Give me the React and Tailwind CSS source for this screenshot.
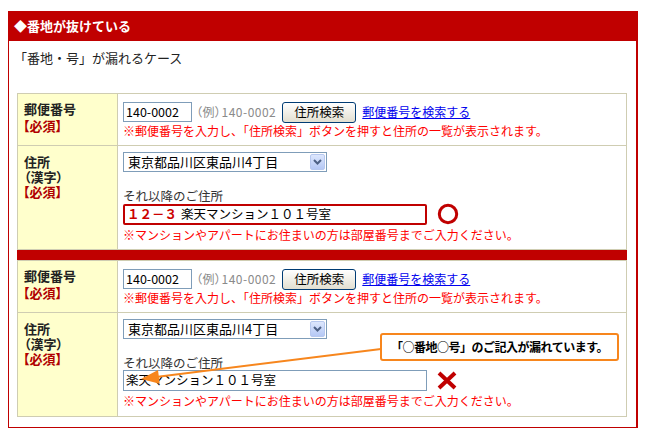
const font = { fontFamily: '"Noto Sans CJK JP", "Noto Sans", sans-serif' };

const ZipRow = () => (
  <div className="flex h-[51px]">
    <div className="w-[100px] shrink-0 bg-[#ffffcc] border-r border-[#cfcdb2] pl-[6px] pt-[6px] leading-[17px] text-[13px] font-bold [font-feature-settings:'palt']">
      <div className="text-[#222]">郵便番号</div>
      <div className="text-[#b00000] -ml-[1px]">【必須】</div>
    </div>
    <div className="flex-1 pl-[5px] pt-[8px] text-[12px]">
      <div className="flex items-center h-[20px]">
        <div className="w-[69px] h-[20px] border border-[#7f9db9] bg-white flex items-center pl-[2px] text-[12.5px] text-black">
          140-0002
        </div>
        <span className="ml-[4px] text-[#8a8a8a] tracking-[0.5px] [font-feature-settings:'palt']">（例）140-0002</span>
        <button className="ml-[6px] w-[74px] h-[21px] border border-[#003c74] rounded-[3px] bg-gradient-to-b from-white to-[#e2dfd0] text-black text-[12.5px] leading-none">
          住所検索
        </button>
        <a href="#" className="ml-[6px] text-[#0000ee] underline">
          郵便番号を検索する
        </a>
      </div>
      <div className="mt-[1px] leading-[16px] text-[#ff0000]">
        ※郵便番号を入力し、「住所検索」ボタンを押すと住所の一覧が表示されます。
      </div>
    </div>
  </div>
);

const AddressRow = ({ ok }) => (
  <div className="flex h-[104px] border-t border-[#cfcdb2]">
    <div className="w-[100px] shrink-0 bg-[#ffffcc] border-r border-[#cfcdb2] pl-[6px] pt-[8px] leading-[15px] text-[13px] font-bold [font-feature-settings:'palt']">
      <div className="text-[#222]">住所</div>
      <div className="text-[#222]">（漢字）</div>
      <div className="text-[#b00000] -ml-[1px]">【必須】</div>
    </div>
    <div className="flex-1 pl-[5px] pt-[6px] text-[12px]">
      <div className="w-[204px] h-[20px] border border-[#7f9db9] bg-white flex items-center justify-between pl-[4px] pr-[1px] text-[13px] text-black">
        <span>東京都品川区東品川4丁目</span>
        <span className="w-[15px] h-[16px] rounded-[2px] border border-[#b7c8ef] bg-gradient-to-b from-[#dde7fd] to-[#b5c8f5] flex items-center justify-center">
          <svg width="9" height="6" viewBox="0 0 9 6">
            <path d="M1 1 L4.5 4.5 L8 1" fill="none" stroke="#4d6185" strokeWidth="2" />
          </svg>
        </span>
      </div>
      <div className="mt-[17px] leading-[14px] text-[12.5px] text-[#333]">それ以降のご住所</div>
      <div className="flex items-center">
        {ok ? (
          <div className="w-[304px] h-[21px] border-2 border-[#c00000] rounded-[2px] bg-white flex items-center pl-[2px] text-[12.5px] text-black">
            <span className="font-bold text-[#cc0000]">１２－３</span>
            <span className="ml-[4px]">楽天マンション１０１号室</span>
          </div>
        ) : (
          <div className="w-[304px] h-[21px] border border-[#7f9db9] bg-white flex items-center pl-[2px] text-[12.5px] text-black">
            楽天マンション１０１号室
          </div>
        )}
        {ok ? (
          <svg className="ml-[10px]" width="22" height="22" viewBox="0 0 22 22">
            <circle cx="11" cy="11" r="8.7" fill="none" stroke="#c00000" strokeWidth="3" />
          </svg>
        ) : (
          <svg className="ml-[10px]" width="20" height="19" viewBox="0 0 20 19">
            <path d="M2 2 L18 17 M18 2 L2 17" stroke="#c00000" strokeWidth="4" />
          </svg>
        )}
      </div>
      <div className="mt-[2px] leading-[16px] text-[#ff0000]">
        ※マンションやアパートにお住まいの方は部屋番号までご入力ください。
      </div>
    </div>
  </div>
);

const FormTable = ({ ok }) => (
  <div className="border border-[#cfcdb2] bg-white">
    <ZipRow />
    <AddressRow ok={ok} />
  </div>
);

export default function App() {
  return (
    <div className="relative w-[648px] h-[437px] bg-white" style={font}>
      <div className="ml-[8px] pt-[11px] w-[630px]">
        <div className="h-[30px] bg-[#c00000] flex items-center pl-[6px] text-white font-bold text-[13px]">
          ◆番地が抜けている
        </div>
        <div className="border-l border-r-2 border-b border-[#c00000] pl-[8px] pr-[9px] pb-[10px]">
          <div className="pt-[9px] leading-[16px] text-[13px] text-[#222] -ml-[3px]">
            「番地・号」が漏れるケース
          </div>
          <div className="mt-[27px]">
            <FormTable ok />
            <div className="h-[10px] bg-[#c00000]" />
            <FormTable ok={false} />
          </div>
        </div>
      </div>

      {/* callout */}
      <svg className="absolute left-0 top-0 pointer-events-none" width="648" height="437">
        <line x1="381" y1="349" x2="156" y2="377" stroke="#f7861d" strokeWidth="2" />
        <polygon points="141,379 158,369.9 159.7,383.7" fill="#f7861d" />
      </svg>
      <div className="absolute left-[380px] top-[333px] w-[239px] h-[28px] border-2 border-[#f7861d] rounded-[3px] bg-white flex items-center justify-center text-[12px] font-bold text-black tracking-[-0.5px]">
        「○番地○号」のご記入が漏れています。
      </div>
    </div>
  );
}
